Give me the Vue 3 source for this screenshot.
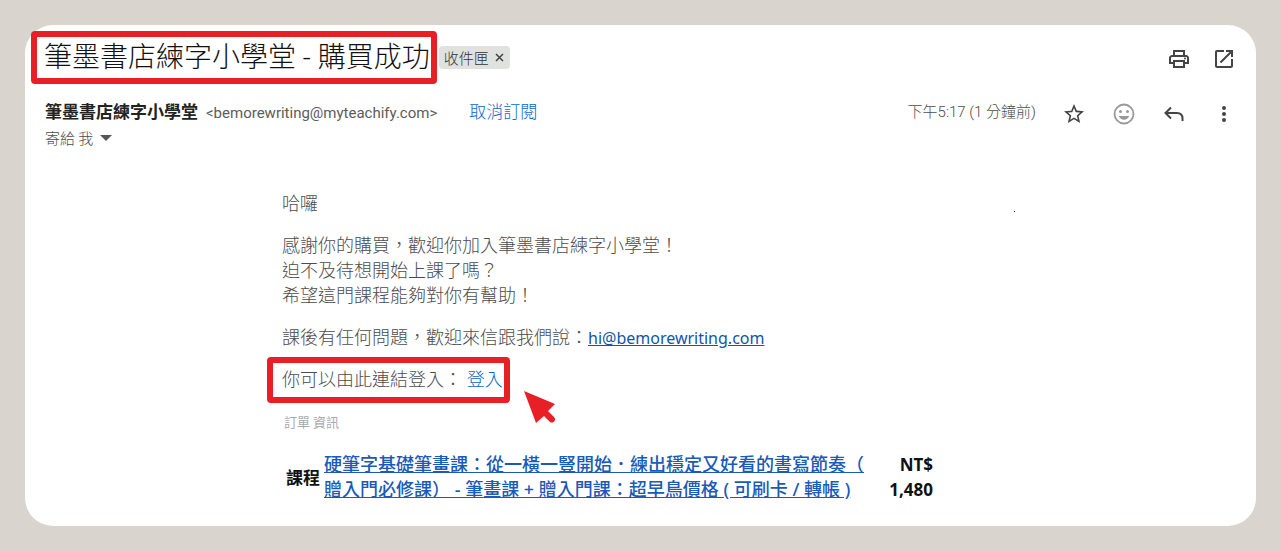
<script setup>
const greeting = ['感謝你的購買，歡迎你加入筆墨書店練字小學堂！', '迫不及待想開始上課了嗎？', '希望這門課程能夠對你有幫助！']
</script>

<template>
  <main class="card">
    <header class="subject">
      <h1 class="title">筆墨書店練字小學堂 - 購買成功</h1>
      <span class="chip">收件匣
        <button type="button" aria-label="移除標籤">
          <svg width="9" height="9" viewBox="0 0 9 9"><path d="M1 1l7 7M8 1L1 8" stroke="#444" stroke-width="1.5" /></svg>
        </button>
      </span>
      <div class="tools top">
        <button type="button" aria-label="列印">
          <svg viewBox="0 0 24 24"><path d="M19 8h-1V3H6v5H5c-1.660 0-3 1.340-3 3v6h4v4h12v-4h4v-6c0-1.660-1.340-3-3-3zM8 5h8v3H8V5zm8 14H8v-4h8v4zm2-4v-2H6v2H4v-4c0-.55.45-1 1-1h14c.55 0 1 .45 1 1v4h-2z" /><circle cx="18" cy="11.500" r="1" /></svg>
        </button>
        <button type="button" aria-label="在新視窗中開啟">
          <svg viewBox="0 0 24 24"><path d="M19 19H5V5h7V3H5c-1.110 0-2 .9-2 2v14c0 1.100.89 2 2 2h14c1.100 0 2-.9 2-2v-7h-2v7zM14 3v2h3.590l-9.830 9.830 1.410 1.410L19 6.410V10h2V3h-7z" /></svg>
        </button>
      </div>
    </header>

    <section class="sender">
      <div class="from">
        <strong>筆墨書店練字小學堂</strong>
        <span class="address">&lt;bemorewriting@myteachify.com&gt;</span>
        <a class="unsubscribe" href="#">取消訂閱</a>
      </div>
      <time class="time">下午5:17 (1 分鐘前)</time>
      <div class="tools">
        <button type="button" aria-label="加上星號">
          <svg viewBox="0 0 24 24"><path d="M22 9.240l-7.190-.62L12 2 9.190 8.630 2 9.240l5.460 4.730L5.820 21 12 17.270 18.180 21l-1.630-7.030L22 9.240zM12 15.400l-3.760 2.270 1-4.280-3.320-2.880 4.380-.38L12 6.100l1.710 4.040 4.380.38-3.320 2.880 1 4.280L12 15.400z" /></svg>
        </button>
        <button type="button" class="pale" aria-label="新增回應">
          <svg viewBox="0 0 24 24"><circle cx="12" cy="12" r="9.500" fill="none" stroke="currentColor" stroke-width="1.800" /><circle cx="8.500" cy="9.500" r="1.500" /><circle cx="15.500" cy="9.500" r="1.500" /><path d="M6.800 14h10.400c-.8 2.300-2.800 3.700-5.200 3.700S7.600 16.300 6.800 14z" /></svg>
        </button>
        <button type="button" aria-label="回覆">
          <svg viewBox="0 0 24 24"><path d="M9 5.500L3.500 11 9 16.500M4 11h11c3.500 0 5.500 2 5.500 5.500V19" fill="none" stroke="currentColor" stroke-width="2" /></svg>
        </button>
        <button type="button" aria-label="更多">
          <svg viewBox="0 0 24 24"><circle cx="12" cy="6" r="2" /><circle cx="12" cy="12" r="2" /><circle cx="12" cy="18" r="2" /></svg>
        </button>
      </div>
    </section>
    <button type="button" class="recipient">寄給 我
      <svg width="12" height="6" viewBox="0 0 12 6"><path d="M0 0h12L6 6z" fill="#555" /></svg>
    </button>

    <article class="message">
      <i class="speck"></i>
      <p>哈囉</p>
      <p><template v-for="(line, i) in greeting" :key="i">{{ line }}<br v-if="i < 2"></template></p>
      <p>課後有任何問題，歡迎來信跟我們說：<a class="mail" href="mailto:hi@bemorewriting.com">hi@bemorewriting.com</a></p>
      <p class="login">
        你可以由此連結登入： <a href="#">登入</a>
        <svg class="pointer" width="34" height="36" viewBox="0 0 34 36"><path d="M0 0L31 13 24 20l6 6c3 3-1 7-4 5l-6-6-8 7z" fill="#e81f27" /></svg>
      </p>
      <h2>訂單 資訊</h2>
      <table>
        <tbody>
          <tr>
            <th scope="row">課程</th>
            <td><a href="#">硬筆字基礎筆畫課：從一橫一豎開始．練出穩定又好看的書寫節奏（<br>贈入門必修課） - 筆畫課 + 贈入門課：超早鳥價格 ( 可刷卡 / 轉帳 )</a></td>
            <td class="price">NT$ 1,480</td>
          </tr>
        </tbody>
      </table>
    </article>
  </main>
</template>

<style>
body {
  background: #d9d4ce;
}
</style>

<style scoped>
.card {
  margin: 25px;
  padding: 6px 20px 24px;
  border-radius: 28px;
  background: #fff;
  color: #4c4c4c;
  font-family: "Noto Sans", "Noto Sans CJK TC", sans-serif;
  font-size: 17px;
  line-height: 25px;
}
button {
  padding: 0;
  border: 0;
  background: none;
  color: #444;
  font: inherit;
  cursor: pointer;
}
a {
  color: #0b66c8;
  text-decoration: none;
}
.subject {
  display: flex;
  align-items: center;
  margin-left: -14px;
}
.title {
  margin: 0;
  padding: 0 1px 0 7px;
  border: 6px solid #e81f27;
  border-radius: 4px;
  color: #111;
  font-family: Roboto, "Noto Sans CJK TC", sans-serif;
  font-size: 28px;
  font-weight: 300;
  line-height: 41px;
  white-space: nowrap;
}
.chip {
  display: flex;
  align-items: center;
  gap: 6px;
  margin-left: 2px;
  padding: 0 6px 0 5px;
  border-radius: 4px;
  background: #dfe2df;
  color: #333;
  font-family: "Noto Sans CJK TC", sans-serif;
  font-size: 15px;
  font-weight: 300;
  line-height: 23px;
  white-space: nowrap;
}
.chip button {
  display: flex;
}
.tools {
  display: flex;
  gap: 26px;
  margin-top: 2px;
}
.tools.top {
  gap: 21px;
  margin-left: auto;
}
.tools button {
  display: flex;
}
.tools svg {
  width: 24px;
  height: 24px;
  fill: currentColor;
}
.tools .pale {
  color: #999;
}
.sender {
  display: flex;
  align-items: center;
  margin-top: 15px;
}
.from {
  display: flex;
  align-items: baseline;
  white-space: nowrap;
}
.from strong {
  color: #222;
}
.address {
  margin-left: 8px;
  color: #5c5c5c;
  font-family: Roboto, sans-serif;
  font-size: 15px;
}
.unsubscribe {
  margin-left: 32px;
  font-weight: 300;
}
.time {
  margin: 0 26px 0 auto;
  font-family: Roboto, "Noto Sans CJK TC", sans-serif;
  font-size: 15px;
  font-weight: 300;
  white-space: nowrap;
}
.recipient {
  display: flex;
  align-items: center;
  gap: 7px;
  color: #4c4c4c;
  font-family: "Noto Sans CJK TC", sans-serif;
  font-size: 15px;
  font-weight: 300;
  line-height: 23px;
}
.message {
  position: relative;
  max-width: 651px;
  margin: 42px auto 0;
  padding-right: 66px;
  font-size: 18px;
  font-weight: 300;
}
.speck {
  position: absolute;
  top: 20px;
  right: -16px;
  width: 1px;
  height: 1px;
  background: #222;
}
p {
  margin: 0 0 17px;
}
.mail {
  color: #1155aa;
  font-family: "Noto Sans", sans-serif;
  font-size: 16px;
  font-weight: 400;
  text-decoration: underline;
}
.login {
  position: relative;
  width: fit-content;
  margin: -11px 0 0 -15px;
  padding: 4px 1px 5px 9px;
  border: 6px solid #e81f27;
  border-radius: 4px;
}
.pointer {
  position: absolute;
  top: 28px;
  left: calc(100% + 20px);
}
h2 {
  margin: 6px 0 18px 2px;
  color: #aaa;
  font-family: "Noto Sans CJK TC", sans-serif;
  font-size: 13px;
  font-weight: 400;
}
table {
  width: 100%;
  border-collapse: collapse;
  font-weight: 700;
}
th,
td {
  padding: 0;
}
th {
  width: 42px;
  padding-left: 4px;
  color: #111;
  font-size: 17px;
  text-align: left;
  box-sizing: border-box;
}
td a {
  color: #1a5ab8;
  font-weight: 500;
  text-decoration: underline;
  white-space: nowrap;
}
.price {
  width: 50px;
  color: #111;
  font-size: 17px;
  text-align: right;
}
</style>
